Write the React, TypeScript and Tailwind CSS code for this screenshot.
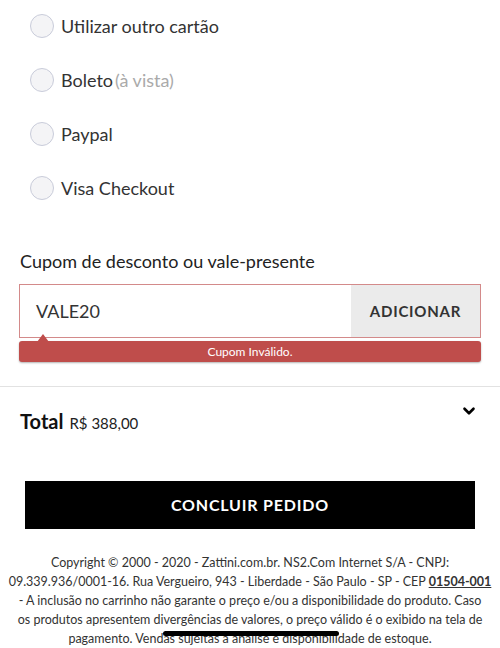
import { ChevronDown } from "lucide-react";

const options = [
  { label: "Utilizar outro cartão" },
  { label: "Boleto", extra: "(à vista)" },
  { label: "Paypal" },
  { label: "Visa Checkout" },
];

function Radio() {
  return (
    <span className="w-6 h-6 rounded-full border border-[#c9ccda] bg-[#f4f4f6] shrink-0" />
  );
}

export default function App() {
  return (
    <div
      className="relative w-[500px] h-[648px] overflow-hidden bg-white text-[#333]"
      style={{ fontFamily: "Lato, 'Noto Sans', sans-serif" }}
    >
      {/* Payment options */}
      <div className="flex flex-col pl-[30px] pt-[14px] gap-[30px]">
        {options.map((o) => (
          <div key={o.label} className="flex items-center gap-[7px] h-6">
            <Radio />
            <span className="text-[18px] text-[#333]">
              {o.label}
              {o.extra && (
                <span className="text-[#aaa] ml-[2px]">{o.extra}</span>
              )}
            </span>
          </div>
        ))}
      </div>

      {/* Coupon */}
      <div className="px-[19px] mt-[48px]">
        <div className="text-[18px] text-[#222] pl-px">
          Cupom de desconto ou vale-presente
        </div>
        <div className="mt-[9px] flex h-[54px] border border-[#d38a8a]">
          <div className="flex-1 flex items-center pl-4 text-[18px] text-[#333]">
            VALE20
          </div>
          <div className="w-[129px] bg-[#ebebeb] flex items-center justify-center text-[15px] font-bold tracking-[0.8px] text-[#333]">
            ADICIONAR
          </div>
        </div>
        <div className="relative mt-[3px] h-[21px] rounded-[3px] bg-[#bf4d4b] shadow-[0_1px_2px_rgba(0,0,0,0.3)] flex items-center justify-center text-[12px] text-white">
          <span className="absolute -top-[7px] left-[18px] w-0 h-0 border-x-[6px] border-x-transparent border-b-[8px] border-b-[#bf4d4b]" />
          Cupom Inválido.
        </div>
      </div>

      <div className="mt-[24px] border-t border-[#e2e2e2]" />

      {/* Total */}
      <div className="flex items-start justify-between pl-5 pr-[22px] pt-[19px]">
        <div className="flex items-baseline gap-[6px]">
          <span className="text-[20px] font-bold text-[#111]">Total</span>
          <span className="text-[15px] text-[#222]">R$ 388,00</span>
        </div>
        <ChevronDown className="w-[18px] h-[18px] -mt-[4px] text-black" strokeWidth={3.5} />
      </div>

      {/* Button */}
      <div className="px-[25px] mt-[45px]">
        <div className="h-[48px] bg-black flex items-center justify-center text-white text-[16px] font-bold tracking-[0.8px]">
          CONCLUIR PEDIDO
        </div>
      </div>

      {/* Footer */}
      <p className="mt-[24px] px-1 text-center text-[12.5px] leading-[19px] text-[#333] whitespace-nowrap">
        Copyright © 2000 - 2020 - Zattini.com.br. NS2.Com Internet S/A - CNPJ:
        <br />
        09.339.936/0001-16. Rua Vergueiro, 943 - Liberdade - São Paulo - SP - CEP{" "}
        <span className="font-bold underline">01504-001</span>
        <br />- A inclusão no carrinho não garante o preço e/ou a disponibilidade
        do produto. Caso
        <br />
        os produtos apresentem divergências de valores, o preço válido é o
        exibido na tela de
        <br />
        pagamento. Vendas sujeitas a análise e disponibilidade de estoque.
      </p>

      {/* home indicator */}
      <div className="absolute left-[163px] top-[631px] w-[176px] h-[5px] rounded-full bg-black" />
    </div>
  );
}
